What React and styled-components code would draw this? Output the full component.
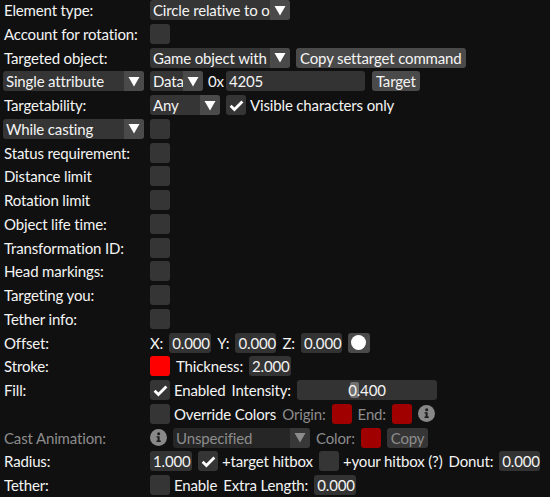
import styled, { createGlobalStyle } from "styled-components";

const GlobalStyle = createGlobalStyle`
  html, body {
    margin: 0;
    padding: 0;
    background: #101010;
  }
  body {
    font-family: Lato, "Noto Sans", sans-serif;
    font-size: 15px;
    letter-spacing: -0.15px;
    color: #f4f4f4;
  }
`;

const Panel = styled.div`
  display: flex;
  flex-direction: column;
  gap: 3.75px;
  width: 550px;
  height: 497px;
  overflow: hidden;
`;

const Row = styled.div`
  display: flex;
  align-items: center;
  gap: 6px;
  height: 20px;
  flex-shrink: 0;
  white-space: nowrap;
`;

const Label = styled.div`
  width: 144px;
  padding-left: 4px;
  box-sizing: border-box;
  flex-shrink: 0;
  color: ${(p) => (p.$muted ? "#8c8c8c" : "#f4f4f4")};
`;

const Text = styled.span`
  color: ${(p) => (p.$muted ? "#8c8c8c" : "#f4f4f4")};
  margin-left: ${(p) => p.$ml || 0}px;
  line-height: 20px;
`;

const Box = styled.div`
  width: 20px;
  height: 20px;
  border-radius: 3px;
  background: #353535;
  flex-shrink: 0;
  display: flex;
  align-items: center;
  justify-content: center;
`;

const Swatch = styled.div`
  width: 20px;
  height: 20px;
  border-radius: 3px;
  background: ${(p) => p.$color};
  flex-shrink: 0;
`;

const ComboBox = styled.div`
  display: flex;
  width: ${(p) => p.$width}px;
  height: 20px;
  margin-left: ${(p) => p.$ml || 0}px;
  border-radius: 3px;
  overflow: hidden;
  background: ${(p) => (p.$disabled ? "#262626" : "#353535")};
  flex-shrink: 0;
`;

const ComboText = styled.div`
  flex: 1;
  min-width: 0;
  overflow: hidden;
  padding-left: 3px;
  line-height: 20px;
  color: ${(p) => (p.$disabled ? "#8c8c8c" : "#f4f4f4")};
`;

const ArrowBox = styled.div`
  width: 20px;
  height: 20px;
  flex-shrink: 0;
  background: ${(p) => (p.$disabled ? "#383838" : "#4a4a4a")};
  display: flex;
  align-items: center;
  justify-content: center;
`;

const Field = styled.div`
  width: ${(p) => p.$width}px;
  height: 20px;
  margin-left: ${(p) => p.$ml || 0}px;
  border-radius: 3px;
  background: #333333;
  padding-left: 3px;
  box-sizing: border-box;
  line-height: 20px;
  flex-shrink: 0;
`;

const Button = styled.div`
  height: 20px;
  padding: 0 4px;
  border-radius: 3px;
  line-height: 20px;
  background: ${(p) => (p.$disabled ? "#363636" : "#4a4a4a")};
  color: ${(p) => (p.$disabled ? "#8c8c8c" : "#f4f4f4")};
  margin-left: ${(p) => p.$ml || 0}px;
  flex-shrink: 0;
`;

const ColorButton = styled.div`
  width: 22px;
  height: 20px;
  border-radius: 3px;
  background: #4a4a4a;
  display: flex;
  align-items: center;
  justify-content: center;
  flex-shrink: 0;
`;

const Dot = styled.div`
  width: 15px;
  height: 15px;
  border-radius: 50%;
  background: #ffffff;
`;

const SliderTrack = styled.div`
  position: relative;
  width: 140px;
  height: 20px;
  border-radius: 3px;
  background: #333333;
  text-align: center;
  line-height: 20px;
  flex-shrink: 0;
`;

const Grab = styled.div`
  position: absolute;
  top: 2px;
  bottom: 2px;
  left: 53px;
  width: 9px;
  border-radius: 2px;
  background: #707070;
`;

const SliderValue = styled.span`
  position: relative;
`;

const Arrow = ({ muted }) => (
  <svg width="12" height="11" viewBox="0 0 12 11">
    <path d="M0.5 1 L11.5 1 L6 10.5 Z" fill={muted ? "#8c8c8c" : "#ffffff"} />
  </svg>
);

const Check = () => (
  <svg width="15" height="13" viewBox="0 0 15 13">
    <path d="M1.6 6.8 L5.4 10.6 L13.4 2.4" fill="none" stroke="#ffffff" strokeWidth="2.8" />
  </svg>
);

const Info = () => (
  <svg width="17" height="17" viewBox="0 0 17 17" style={{ flexShrink: 0 }}>
    <circle cx="8.5" cy="8.5" r="8.5" fill="#888888" />
    <circle cx="8.7" cy="4.8" r="1.5" fill="#1c1c1c" />
    <path d="M6.5 7.2 H9.6 V11.6 H10.8 V13 H6.5 V11.6 H7.6 V8.6 H6.5 Z" fill="#1c1c1c" />
  </svg>
);

const Checkbox = ({ checked }) => <Box>{checked && <Check />}</Box>;

const Combo = ({ width, ml, disabled, children }) => (
  <ComboBox $width={width} $ml={ml} $disabled={disabled}>
    <ComboText $disabled={disabled}>{children}</ComboText>
    <ArrowBox $disabled={disabled}>
      <Arrow muted={disabled} />
    </ArrowBox>
  </ComboBox>
);

const checkRows = [
  "Status requirement:",
  "Distance limit",
  "Rotation limit",
  "Object life time:",
  "Transformation ID:",
  "Head markings:",
  "Targeting you:",
  "Tether info:",
];

export default function App() {
  return (
    <>
      <GlobalStyle />
      <Panel>
        <Row>
          <Label>Element type:</Label>
          <Combo width={140}>Circle relative to object</Combo>
        </Row>
        <Row>
          <Label>Account for rotation:</Label>
          <Checkbox />
        </Row>
        <Row>
          <Label>Targeted object:</Label>
          <Combo width={140}>Game object with</Combo>
          <Button>Copy settarget command</Button>
        </Row>
        <Row>
          <Combo width={141} ml={3}>Single attribute</Combo>
          <Combo width={53}>Data</Combo>
          <Text $ml={-1}>0x</Text>
          <Field $width={139} $ml={-4}>4205</Field>
          <Button $ml={1}>Target</Button>
        </Row>
        <Row>
          <Label>Targetability:</Label>
          <Combo width={70}>Any</Combo>
          <Checkbox checked />
          <Text $ml={-2}>Visible characters only</Text>
        </Row>
        <Row>
          <Combo width={141} ml={3}>While casting</Combo>
          <Checkbox />
        </Row>
        {checkRows.map((label) => (
          <Row key={label}>
            <Label>{label}</Label>
            <Checkbox />
          </Row>
        ))}
        <Row>
          <Label>Offset:</Label>
          <Text>X:</Text>
          <Field $width={42}>0.000</Field>
          <Text>Y:</Text>
          <Field $width={41}>0.000</Field>
          <Text>Z:</Text>
          <Field $width={41}>0.000</Field>
          <ColorButton>
            <Dot />
          </ColorButton>
        </Row>
        <Row>
          <Label>Stroke:</Label>
          <Swatch $color="#ff0000" />
          <Text>Thickness:</Text>
          <Field $width={42}>2.000</Field>
        </Row>
        <Row>
          <Label>Fill:</Label>
          <Checkbox checked />
          <Text $ml={-2}>Enabled</Text>
          <Text>Intensity:</Text>
          <SliderTrack>
            <Grab />
            <SliderValue>0.400</SliderValue>
          </SliderTrack>
        </Row>
        <Row>
          <Label />
          <Checkbox />
          <Text $ml={-2}>Override Colors</Text>
          <Text $muted>Origin:</Text>
          <Swatch $color="#a00000" />
          <Text $muted>End:</Text>
          <Swatch $color="#a00000" />
          <Info />
        </Row>
        <Row>
          <Label $muted>Cast Animation:</Label>
          <Info />
          <Combo width={137} disabled>Unspecified</Combo>
          <Text $muted>Color:</Text>
          <Swatch $color="#a00000" />
          <Button $disabled>Copy</Button>
        </Row>
        <Row>
          <Label>Radius:</Label>
          <Field $width={42}>1.000</Field>
          <Checkbox checked />
          <Text $ml={-2}>+target hitbox</Text>
          <Checkbox />
          <Text $ml={-2}>+your hitbox (?)</Text>
          <Text>Donut:</Text>
          <Field $width={41}>0.000</Field>
        </Row>
        <Row>
          <Label>Tether:</Label>
          <Checkbox />
          <Text $ml={-2}>Enable</Text>
          <Text>Extra Length:</Text>
          <Field $width={42}>0.000</Field>
        </Row>
      </Panel>
    </>
  );
}
